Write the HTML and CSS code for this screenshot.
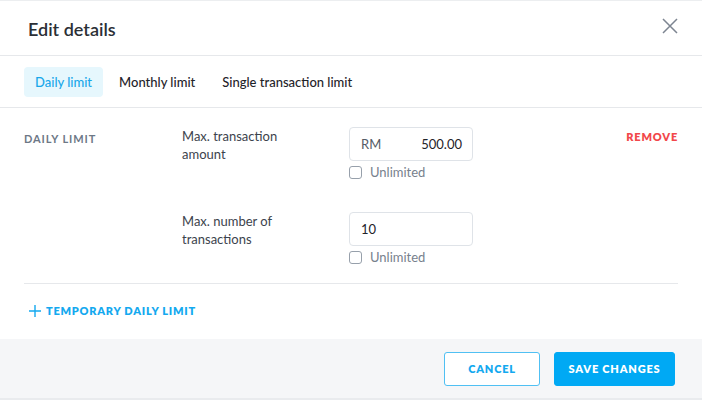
FILE: index.html
```html
<!DOCTYPE html>
<html>
<head>
<meta charset="utf-8">
<link rel="stylesheet" href="styles.css">
</head>
<body>
<div class="modal">
  <div class="header">
    <h1 class="title">Edit details</h1>
    <button class="close" aria-label="Close">
      <svg width="16" height="16" viewBox="0 0 16 16"><path d="M1 1L15 15M15 1L1 15" stroke="#7d8591" stroke-width="1.5" fill="none"/></svg>
    </button>
  </div>
  <div class="tabs">
    <span class="tab active">Daily limit</span>
    <span class="tab">Monthly limit</span>
    <span class="tab">Single transaction limit</span>
  </div>
  <div class="content">
    <div class="limit">
      <div class="section-label">DAILY LIMIT</div>
      <div class="fields">
        <div class="field">
          <div class="field-label">Max. transaction<br>amount</div>
          <div class="control">
            <div class="input"><span class="prefix">RM</span><span class="value">500.00</span></div>
            <label class="check"><span class="box"></span>Unlimited</label>
          </div>
        </div>
        <div class="field">
          <div class="field-label">Max. number of<br>transactions</div>
          <div class="control">
            <div class="input"><span class="value left">10</span></div>
            <label class="check"><span class="box"></span>Unlimited</label>
          </div>
        </div>
      </div>
      <div class="remove">REMOVE</div>
    </div>
    <div class="add">
      <svg width="12" height="12" viewBox="0 0 12 12"><path d="M6 0V12M0 6H12" stroke="#14a9ef" stroke-width="1.4" fill="none"/></svg>
      <span>TEMPORARY DAILY LIMIT</span>
    </div>
  </div>
  <div class="footer">
    <button class="btn btn-outline">CANCEL</button>
    <button class="btn btn-primary">SAVE CHANGES</button>
  </div>
</div>
</body>
</html>
```
FILE: styles.css
```css
* { box-sizing: border-box; }
html, body { margin: 0; padding: 0; background: #fff; }
body { font-family: "Lato", "Noto Sans", sans-serif; color: #2b3038; }
.modal {
  width: 702px;
  height: 400px;
  border-top: 1px solid #eceef0;
  border-bottom: 2px solid #e9ebee;
  display: flex;
  flex-direction: column;
}
.header {
  height: 55px;
  border-bottom: 1px solid #e6e8eb;
  display: flex;
  align-items: center;
  justify-content: space-between;
  padding: 0 24px 0 28px;
}
.title { margin: 0; font-size: 18px; font-weight: 600; color: #2b2f36; padding-top: 1px; }
.close { border: 0; background: none; padding: 0; width: 16px; height: 16px; margin-bottom: 5px; }
.close svg { display: block; }
.tabs {
  height: 52px;
  border-bottom: 1px solid #e6e8eb;
  display: flex;
  align-items: center;
  padding: 0 24px;
  gap: 5px;
}
.tab { font-size: 13px; font-weight: 500; color: #1f2329; padding: 8px 11px; border-radius: 4px; line-height: 14px; }
.tab.active { background: #e6f7fd; color: #18a7ea; height: 30px; }
.content { flex: 1; padding: 0 24px; }
.limit {
  display: flex;
  padding: 19px 0 19px;
  border-bottom: 1px solid #e6e8eb;
}
.section-label { width: 158px; font-size: 11px; font-weight: 700; letter-spacing: 0.9px; color: #6d7886; padding-top: 5px; }
.fields { display: flex; flex-direction: column; gap: 33px; }
.field { display: flex; }
.field-label { width: 167px; font-size: 13px; line-height: 18px; color: #3c434c; padding-top: 0; }
.control { width: 124px; }
.input {
  height: 34px;
  border: 1px solid #dfe3e8;
  border-radius: 4px;
  display: flex;
  align-items: center;
  justify-content: space-between;
  padding: 0 10px 0 11px;
  font-size: 13px;
}
.prefix { color: #555c66; }
.value { color: #1f2329; }
.check { display: flex; align-items: center; gap: 8px; margin-top: 4px; font-size: 13px; color: #77818d; line-height: 14px; }
.box { width: 13px; height: 13px; border: 1px solid #97a0ab; border-radius: 3px; }
.remove { margin-left: auto; font-size: 11px; font-weight: 800; letter-spacing: 0.8px; color: #f2474b; padding-top: 3px; }
.add { display: flex; align-items: center; gap: 5px; padding: 20px 0 0 5px; font-size: 11px; font-weight: 800; letter-spacing: 0.75px; color: #14a9ef; }
.footer {
  height: 59px;
  background: #f5f6f8;
  display: flex;
  align-items: center;
  justify-content: flex-end;
  gap: 14px;
  padding: 0 27px 0 0;
}
.btn {
  height: 34px;
  border-radius: 3px;
  font-family: inherit;
  font-size: 11px;
  font-weight: 800;
  letter-spacing: 0.8px;
}
.btn-outline { width: 96px; background: #fff; border: 1px solid #50c0f3; color: #14a9ef; }
.btn-primary { width: 121px; background: #00a9f4; border: 1px solid #00a9f4; color: #fff; }
```
